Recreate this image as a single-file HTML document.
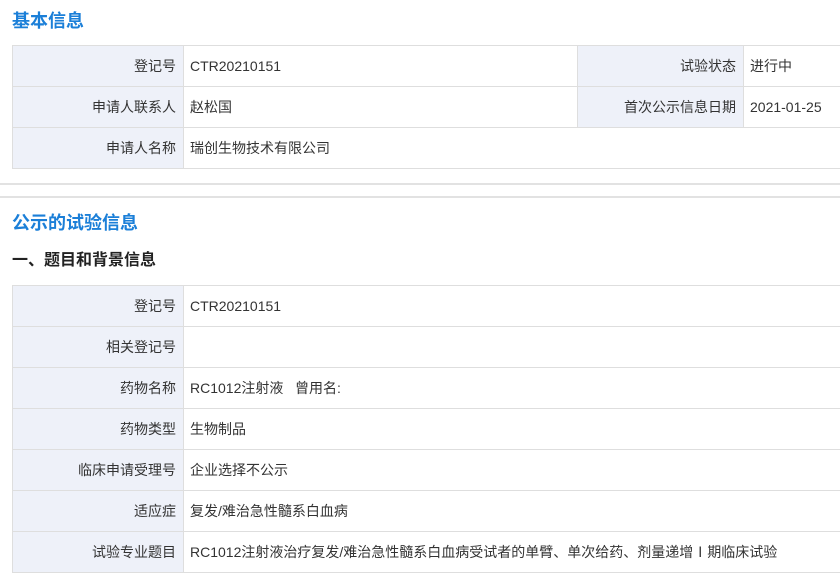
<!DOCTYPE html>
<html><head><meta charset="utf-8"><style>
*{margin:0;padding:0;box-sizing:border-box}
body{width:840px;height:564px;overflow:hidden;background:#fff;font-family:"Liberation Sans","Noto Sans CJK SC",sans-serif;color:#333;position:relative}
.t{position:absolute;left:12px;color:#1b7fd8;font-weight:bold;font-size:18px;line-height:24px}
.s{position:absolute;left:12px;color:#222;font-weight:bold;font-size:16px;line-height:22px}
table{position:absolute;left:12px;border-collapse:collapse;font-size:14px}
td{height:41px;border:1px solid #dedede;padding:0 6px;white-space:nowrap;overflow:hidden}
td.l{background:#eef1f9;text-align:right;width:171px;padding-right:7px}
.hr{position:absolute;left:0;width:840px;height:2px;background:#e2e2e2}
</style></head><body>
<div class="t" style="top:9px">基本信息</div>
<table style="top:45px;width:840px;table-layout:fixed">
<colgroup><col style="width:171px"><col style="width:394px"><col style="width:166px"><col style="width:109px"></colgroup>
<tr><td class="l">登记号</td><td>CTR20210151</td><td class="l">试验状态</td><td>进行中</td></tr>
<tr><td class="l">申请人联系人</td><td>赵松国</td><td class="l">首次公示信息日期</td><td>2021-01-25</td></tr>
<tr><td class="l">申请人名称</td><td colspan="3">瑞创生物技术有限公司</td></tr>
</table>
<div class="hr" style="top:183px"></div>
<div class="hr" style="top:196px"></div>
<div class="t" style="top:211px">公示的试验信息</div>
<div class="s" style="top:250px">一、题目和背景信息</div>
<table style="top:285px;width:840px">
<tr><td class="l">登记号</td><td>CTR20210151</td></tr>
<tr><td class="l">相关登记号</td><td></td></tr>
<tr><td class="l">药物名称</td><td>RC1012注射液&nbsp;&nbsp;&nbsp;曾用名:</td></tr>
<tr><td class="l">药物类型</td><td>生物制品</td></tr>
<tr><td class="l">临床申请受理号</td><td>企业选择不公示</td></tr>
<tr><td class="l">适应症</td><td>复发/难治急性髓系白血病</td></tr>
<tr><td class="l">试验专业题目</td><td>RC1012注射液治疗复发/难治急性髓系白血病受试者的单臂、单次给药、剂量递增Ⅰ期临床试验</td></tr>
</table>
</body></html>
